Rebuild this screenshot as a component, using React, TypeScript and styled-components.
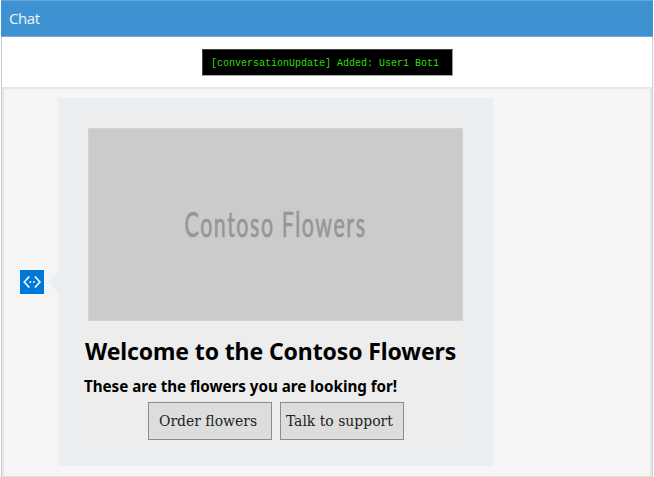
import React from 'react';
import styled, { createGlobalStyle } from 'styled-components';

const Global = createGlobalStyle`
  * { box-sizing: border-box; }
  body { margin: 0; background: #fff; overflow: hidden; }
`;

const Window = styled.div`
  width: 654px;
  height: 477px;
  display: flex;
  flex-direction: column;
  background: #fff;
`;

const Header = styled.header`
  height: 37px;
  flex: none;
  margin: 0 1px;
  padding: 0 0 0 8px;
  display: flex;
  align-items: center;
  background: #3e92d2;
  border-top: 1px solid #66a8da;
  border-bottom: 1px solid #7fa6cb;
  color: #eef6fc;
  font: 15px/35px 'Open Sans', sans-serif;
  letter-spacing: -0.4px;
`;

const Body = styled.main`
  flex: 1;
  min-height: 0;
  margin: 0 1px;
  display: flex;
  flex-direction: column;
  border-left: 1px solid #c6cbd0;
  border-right: 1px solid #cdced6;
`;

const EventRow = styled.div`
  height: 50px;
  flex: none;
  padding: 12px 0 0 200px;
`;

const EventLog = styled.div`
  width: 251px;
  height: 27px;
  padding-left: 8px;
  background: #000;
  border: 1px solid #444;
  border-color: #444 #999 #aaa #444;
  color: #32dc0c;
  font: 10px/27px 'Liberation Mono', monospace;
  white-space: pre;
`;

const Conversation = styled.section`
  flex: 1;
  min-height: 0;
  padding: 9px 0 0 16px;
  display: flex;
  align-items: flex-start;
  background: #f5f5f5;
  border: 2px solid #e6e7e8;
  border-bottom: 1px solid #dcdddf;
`;

const Avatar = styled.div`
  width: 24px;
  height: 24px;
  flex: none;
  margin-top: 172px;
  background: #0078d7;
  svg { display: block; }
`;

const Tail = styled.svg`
  flex: none;
  margin: 174px 0 0 4px;
`;

const Bubble = styled.div`
  width: 435px;
  height: 368px;
  flex: none;
  padding: 22px;
  background: #eaeef1;
`;

const Card = styled.article`
  width: 391px;
  height: 326px;
  padding: 8px 8px 0;
  display: flex;
  flex-direction: column;
  background: #ededed;
`;

const Hero = styled.svg`
  flex: none;
  display: block;
  width: 375px;
  height: 193px;
  background: #cbcbcb;
  outline: 1px solid #d2d2d2;
  outline-offset: -1px;
`;

const Title = styled.h1`
  margin: 14px 0 0 -3px;
  font: 700 23px/32px 'Noto Sans', sans-serif;
  letter-spacing: -0.12px;
  color: #000;
  white-space: nowrap;
`;

const Subtitle = styled.h2`
  margin: 8px 0 0 -4px;
  font: 700 15.2px/22px 'Noto Sans', sans-serif;
  letter-spacing: -0.03px;
  color: #000;
  white-space: nowrap;
`;

const Actions = styled.div`
  display: flex;
  gap: 8px;
  margin: 5px 0 0 60px;
`;

const Action = styled.button<{ $inset: number }>`
  width: 124px;
  height: 38px;
  flex: none;
  padding: 0 0 0 ${(p) => p.$inset}px;
  border: 1px solid #8c8c8c;
  background: #ddd;
  color: #222;
  font: 15.5px/34px 'DejaVu Serif Condensed', 'DejaVu Serif', serif;
  font-stretch: condensed;
  letter-spacing: 0;
  text-align: left;
  white-space: nowrap;
`;

export default function App() {
  return (
    <>
      <Global />
      <Window>
        <Header>Chat</Header>
        <Body>
          <EventRow>
            <EventLog>[conversationUpdate] Added: User1 Bot1</EventLog>
          </EventRow>
          <Conversation>
            <Avatar>
              <svg width="24" height="24" viewBox="0 0 24 24" fill="none" stroke="#fff">
                <path d="M9.3 6.5 L4.3 12 L9.3 17.5 M14.9 6.5 L19.9 12 L14.9 17.5" strokeWidth="1.7" />
                <circle cx="10.4" cy="12" r="0.9" fill="#fff" stroke="none" />
                <circle cx="13.9" cy="12" r="0.9" fill="#fff" stroke="none" />
              </svg>
            </Avatar>
            <Tail width="10" height="20" viewBox="0 0 10 20">
              <path d="M10 0 L0 10 L10 20 Z" fill="#eaeef1" />
            </Tail>
            <Bubble>
              <Card>
                <Hero viewBox="0 0 375 193">
                  <text
                    transform="translate(96.5 109) scale(0.62 1)"
                    fontFamily="Lato, sans-serif"
                    fontSize="34.5"
                    fill="#969696"
                    stroke="#969696"
                    strokeWidth="0.7"
                    textLength="291"
                    lengthAdjust="spacing"
                  >
                    Contoso Flowers
                  </text>
                </Hero>
                <Title>Welcome to the Contoso Flowers</Title>
                <Subtitle>These are the flowers you are looking for!</Subtitle>
                <Actions>
                  <Action $inset={10}>Order flowers</Action>
                  <Action $inset={5}>Talk to support</Action>
                </Actions>
              </Card>
            </Bubble>
          </Conversation>
        </Body>
      </Window>
    </>
  );
}
